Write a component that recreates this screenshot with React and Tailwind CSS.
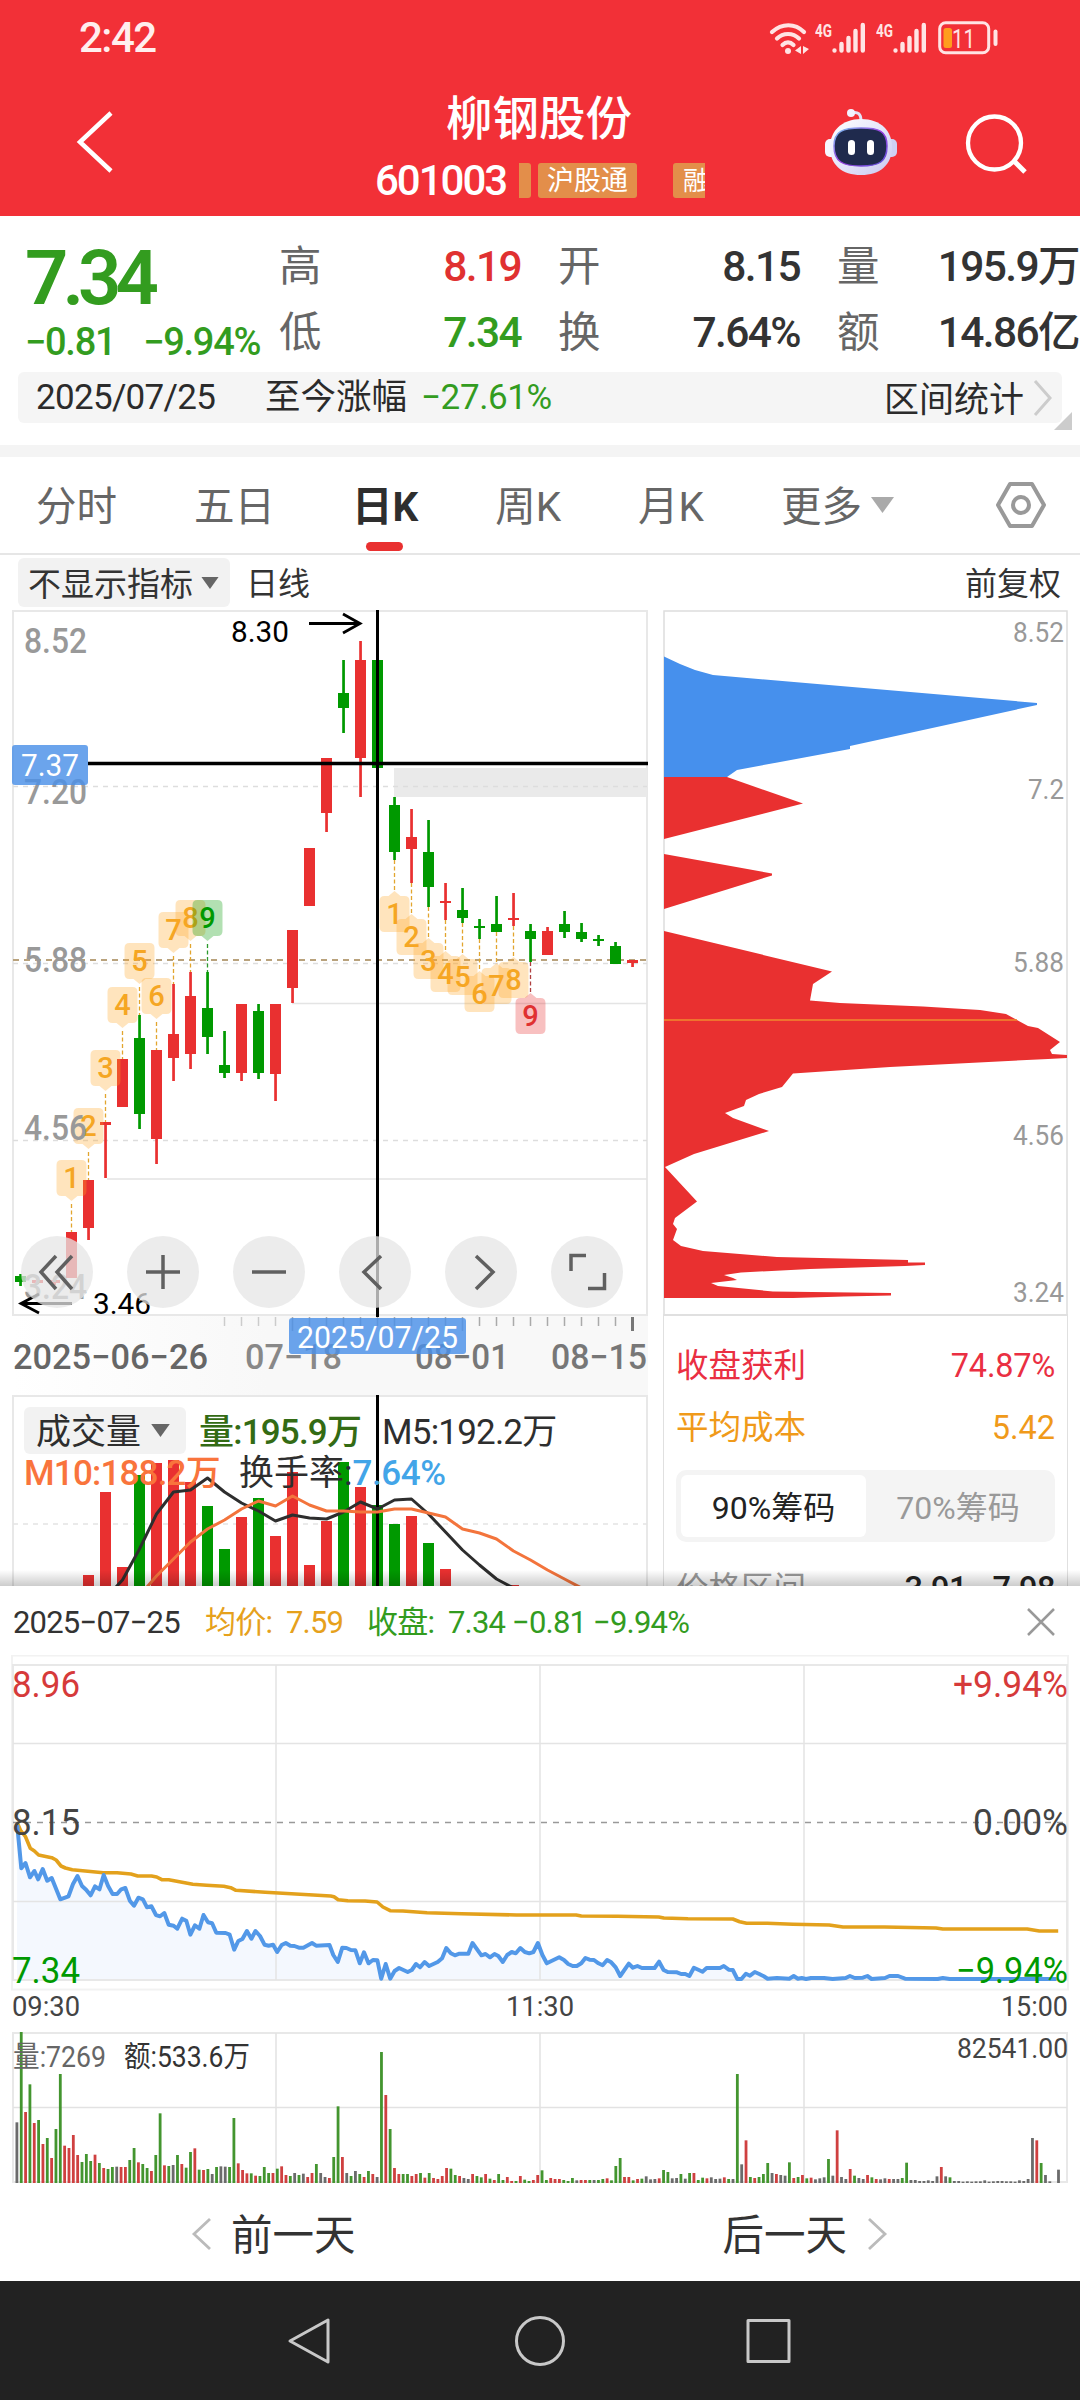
const RED = "#e93030";
const GREEN = "#009900";

// [high, top, bottom, low, colour]
const candles = [
  [1274, 1276, 1282, 1286, "g"],
  [1279, 1280, 1283, 1284, "r"],
  [1278, 1280, 1283, 1285, "r"],
  [1232, 1232, 1278, 1278, "r"],
  [1180, 1180, 1228, 1240, "r"],
  [1122, 1122, 1125, 1178, "r"],
  [1059, 1059, 1107, 1107, "r"],
  [1015, 1038, 1114, 1129, "g"],
  [1050, 1050, 1139, 1164, "r"],
  [984, 1034, 1058, 1081, "r"],
  [972, 996, 1054, 1069, "r"],
  [972, 1008, 1037, 1054, "g"],
  [1031, 1065, 1073, 1078, "g"],
  [1004, 1004, 1073, 1081, "r"],
  [1004, 1011, 1073, 1079, "g"],
  [1004, 1004, 1074, 1101, "r"],
  [930, 930, 988, 1003, "r"],
  [848, 848, 906, 906, "r"],
  [758, 758, 813, 832, "r"],
  [660, 693, 708, 733, "g"],
  [641, 660, 758, 797, "r"],
  [660, 660, 768, 768, "g"],
  [797, 805, 852, 860, "g"],
  [809, 837, 849, 883, "r"],
  [820, 852, 887, 907, "g"],
  [883, 901, 903, 920, "r"],
  [888, 910, 918, 923, "g"],
  [919, 926, 928, 939, "g"],
  [896, 924, 932, 932, "g"],
  [893, 918, 920, 926, "r"],
  [924, 931, 939, 962, "g"],
  [927, 931, 955, 955, "r"],
  [911, 924, 932, 938, "g"],
  [923, 932, 939, 942, "g"],
  [935, 939, 941, 946, "g"],
  [942, 946, 964, 964, "g"],
  [960, 960, 963, 967, "r"],
];
const cx = (i) => 20.5 + 17 * i;

// [candle, digit, box top]
const upTags = [
  [3, 1, 1160],
  [4, 2, 1108],
  [5, 3, 1050],
  [6, 4, 987],
  [7, 5, 943],
  [8, 6, 978],
  [9, 7, 912],
  [10, 8, 900],
  [11, 9, 900],
];
const downTags = [
  [22, 1, 896],
  [23, 2, 919],
  [24, 3, 943],
  [25, 4, 956],
  [26, 5, 959],
  [27, 6, 976],
  [28, 7, 968],
  [29, 8, 962],
  [30, 9, 998],
];

// [candle, top, colour]
const volumes = [
  [4, 1575, "r"], [5, 1492, "r"], [6, 1567, "r"], [7, 1475, "g"], [8, 1463, "r"], [9, 1460, "r"],
  [10, 1482, "r"], [11, 1506, "g"], [12, 1549, "g"], [13, 1517, "r"], [14, 1498, "g"], [15, 1536, "r"],
  [16, 1472, "r"], [17, 1565, "r"], [18, 1521, "r"], [19, 1462, "g"], [20, 1487, "r"], [21, 1505, "g"],
  [22, 1524, "g"], [23, 1516, "r"], [24, 1543, "g"], [25, 1569, "r"], [29, 1585, "r"],
];
const ma5 = [1580, 1549, 1514, 1492, 1490, 1478, 1492, 1503, 1511, 1521, 1515, 1518, 1519, 1512, 1502, 1509, 1500, 1499, 1514, 1532, 1550, 1565, 1579, 1588];
const ma10 = [1576, 1559, 1542, 1529, 1520, 1509, 1501, 1506, 1496, 1505, 1511, 1511, 1512, 1512, 1509, 1509, 1513, 1517, 1529, 1533, 1539, 1551, 1560, 1570, 1579, 1588];

const price =
  "50,555 62,685 74,669 87,712 100,693 111,718 124,687 137,722 150,714 175,778 199,769 212,732 225,708 238,738 250,749 263,766 276,739 289,748 301,705 314,738 327,762 340,762 352,748 364,744 377,782 389,797 402,773 415,778 427,802 440,799 453,825 465,829 477,819 490,854 504,857 515,866 529,836 541,842 553,884 566,856 579,866 591,825 604,847 616,850 628,878 655,879 667,884 680,929 692,903 704,897 717,873 730,896 742,873 755,888 768,914 780,917 793,914 805,936 818,915 830,909 843,917 855,918 868,923 881,923 906,909 918,917 957,915 968,945 981,966 994,923 1006,924 1019,930 1032,931 1045,970 1057,937 1070,970 1083,960 1096,961 1107,1016 1120,972 1133,1016 1146,993 1159,984 1184,996 1196,990 1208,972 1220,982 1233,966 1246,978 1271,966 1284,955 1296,924 1309,940 1321,946 1334,941 1360,941 1372,909 1398,946 1410,942 1423,952 1436,942 1447,948 1460,966 1473,945 1486,936 1498,940 1511,924 1524,936 1537,940 1549,936 1562,909 1575,945 1588,970 1624,952 1638,960 1650,972 1663,978 1675,978 1688,970 1700,954 1712,959 1725,960 1738,970 1750,976 1763,960 1775,967 1788,982 1801,1008 1826,971 1838,983 1851,978 1864,984 1901,984 1914,965 1927,990 1939,996 1966,997 1978,1002 1990,1002 2002,1008 2015,983 2028,989 2040,995 2052,984 2091,984 2102,978 2116,989 2128,990 2141,1017 2153,1017 2166,1001 2178,1007 2192,996 2205,1002 2218,1009 2229,1016 2256,1014 2292,1016 2305,1008 2317,1016 2328,1014 2341,1017 2355,1014 2393,1014 2418,1017 2456,1014 2468,1008 2482,1014 2506,1013 2519,1008 2531,1017 2570,1014 2583,1008 2608,1008 2628,1016 2723,1017 2738,1014 2758,1017 3068,1017";
const average =
  "50,548 60,572 74,590 88,625 100,633 112,645 150,653 163,660 177,678 190,684 210,689 300,698 340,698 380,702 400,708 440,708 455,711 470,719 490,719 560,733 600,736 650,739 670,743 685,751 770,757 960,768 970,770 982,779 1010,782 1060,783 1095,786 1112,801 1133,812 1170,813 1240,818 1340,821 1500,825 1673,825 1688,828 1793,829 1913,831 1928,834 1998,836 2128,837 2148,845 2168,850 2228,850 2303,853 2408,855 2448,861 2568,861 2718,864 2738,867 2983,867 3018,873 3073,873";
const plot = (s) =>
  s
    .split(" ")
    .map((p) => p.split(","))
    .map(([x, y]) => `${(x / 2.904).toFixed(1)},${(1640 + y / 3).toFixed(1)}`)
    .join(" ");

// one bar per minute, colour letter + size
const minuteBars =
  "k182 g453 r213 g296 r180 g189 r117 g135 r75 g162 g327 r112 r105 r144 r84 g63 g87 g66 r85 g60 r45 g42 g48 k49 r48 r48 g69 g105 r62 g57 g45 r36 g84 g209 r53 g51 k54 g84 r57 g46 g93 r104 g40 r39 g42 k27 g48 k50 k49 g48 g195 r59 r39 r29 g29 r22 g21 g48 g30 r30 g43 r50 r24 g21 k30 g24 k28 r18 r30 g57 k30 k18 r15 g78 g230 r78 k30 g21 k36 g27 r18 g36 r27 k18 g393 r264 g162 r45 r27 g27 g27 r21 r27 g30 r16 g30 r15 r12 r21 r45 g43 g24 r21 k15 k12 r27 g21 g17 r27 g13 r9 g27 g9 r18 r6 g6 r21 g10 g6 r9 r24 g38 g9 r15 r12 r12 g9 g6 g15 k8 r9 r9 g9 k9 g9 g12 r14 g8 g51 g75 r18 r18 g8 r12 g13 k20 k11 k12 r14 g39 g33 k14 k15 g27 k13 g30 r30 g9 g16 r14 k17 k12 k13 r17 g12 k12 g327 k56 r128 g18 r15 g18 g27 g60 k30 r27 k24 k22 g62 r15 g18 r24 g14 r16 k11 k14 k17 g72 k22 r158 k18 k12 r42 g22 k15 k12 r24 g17 r12 k11 k14 r12 k12 k12 g15 g61 k9 k9 k6 k6 k8 k6 k20 r48 k20 g17 k6 k6 k4 k5 k4 k5 k5 k8 k4 k5 k6 k6 k5 k5 k4 k8 k6 k12 k135 r128 g60 k24 k5 k0 k40".split(" ");
const barColors = { k: "#6b6b6b", g: "#43952f", r: "#cf4040" };

// chart label with a fixed width
function Label({ x, y, size, len, fill, end, weight, children }) {
  return (
    <text
      x={x}
      y={y}
      fontSize={size}
      fill={fill}
      fontWeight={weight || 400}
      textAnchor={end ? "end" : "start"}
      textLength={len}
      lengthAdjust="spacingAndGlyphs"
    >
      {children}
    </text>
  );
}

function Signal() {
  return (
    <svg className="h-[34px] w-[51px]" viewBox="0 0 51 34">
      <text x="0" y="16" fontSize="19" fontWeight="700" fill="#ffe4e4" textLength="17" lengthAdjust="spacingAndGlyphs">4G</text>
      <g stroke="#ffe4e4" strokeWidth="4.4" strokeLinecap="round">
        <path d="M19.500 29.500V29.600M26.500 23V29.500M33.500 17V29.500M40.500 10V29.500M47.800 4V29.500" />
      </g>
    </svg>
  );
}

function StatusBar() {
  return (
    <div className="flex h-[76px] items-center justify-between pl-[79px] pr-[81px]">
      <span className="text-[42px] font-medium leading-none tracking-[-1.5px] text-[#ffeeee]">2:42</span>
      <div className="flex items-center">
        <svg className="mr-[6px] h-[34px] w-[40px]" viewBox="0 0 40 34" fill="none" stroke="#ffe4e4" strokeWidth="4.2" strokeLinecap="round">
          <path d="M3 11C13 2 26 2 35 11M8 17.500C14 11.500 24 11.500 30 17.500M13.500 24C17 20.500 21 20.500 24.500 24" />
          <circle cx="19" cy="30" r="3" fill="#ffe4e4" stroke="none" />
          <path d="M32 25v8l-6-3.500zM34 25v8l6-5z" fill="#ffe4e4" stroke="none" />
        </svg>
        <Signal />
        <span className="w-[10px]" />
        <Signal />
        <svg className="ml-[11px] h-[34px] w-[61px]" viewBox="0 0 61 34" fill="none">
          <rect x="1.700" y="1.700" width="49" height="30" rx="6" stroke="#ffe4e4" strokeWidth="3" />
          <rect x="5.500" y="7" width="8.500" height="20" rx="2.500" fill="#ff9d1e" />
          <text x="14" y="26.500" fontSize="25" fill="#ffe4e4" textLength="23" lengthAdjust="spacingAndGlyphs">11</text>
          <path d="M57.500 10.500V23" stroke="#ffe4e4" strokeWidth="4" strokeLinecap="round" />
        </svg>
      </div>
    </div>
  );
}

function Robot() {
  return (
    <svg className="h-[70px] w-[74px]" viewBox="0 0 74 70">
      <defs>
        <linearGradient id="shell" x1="0" y1="0" x2="1" y2="1">
          <stop offset="0" stopColor="#ffffff" />
          <stop offset="0.5" stopColor="#e6e6fa" />
          <stop offset="1" stopColor="#c9c8f0" />
        </linearGradient>
        <linearGradient id="glow" x1="0" y1="0" x2="1" y2="1">
          <stop offset="0" stopColor="#79c6f0" />
          <stop offset="0.5" stopColor="#9a3fe0" />
          <stop offset="1" stopColor="#5b55d8" />
        </linearGradient>
      </defs>
      <path d="M27 6C34 4 37 7 37 14" fill="none" stroke="#e3e2f7" strokeWidth="3" />
      <circle cx="27" cy="6" r="4" fill="#f3f2ff" />
      <rect x="1" y="32" width="12" height="18" rx="5" fill="#f7f7ff" />
      <rect x="61" y="32" width="12" height="18" rx="5" fill="#cfd0f3" />
      <path d="M37 12C57 12 68 24 68 40C68 58 56 68 37 68C18 68 6 58 6 40C6 24 18 12 37 12Z" fill="url(#shell)" />
      <path d="M37 21C55 21 63 24 63 39C63 55 55 59 37 59C19 59 10 55 10 39C10 24 19 21 37 21Z" fill="#1f2a4d" stroke="url(#glow)" strokeWidth="1.500" />
      <rect x="24" y="33" width="7" height="15" rx="3.500" fill="#fff" />
      <rect x="43" y="33" width="7" height="15" rx="3.500" fill="#fff" />
    </svg>
  );
}

function Header() {
  return (
    <header className="h-[216px] bg-[#f23037] text-white">
      <StatusBar />
      <div className="flex h-[140px] items-start">
        <div className="w-[375px] pl-[74px] pt-[33px]">
          <svg className="h-[66px] w-[42px]" viewBox="0 0 42 66" fill="none" stroke="#fff" strokeWidth="4.500">
            <path d="M37 4L6 33L37 62" />
          </svg>
        </div>
        <div className="w-[330px] pt-[18px]">
          <h1 className="pl-[71px] text-[46.5px] font-medium leading-[50px]">柳钢股份</h1>
          <div className="mt-[18px] flex h-[36px] items-center overflow-hidden">
            <span className="w-[144px] pt-[2px] text-[42px] font-medium leading-none tracking-[-2px]">601003</span>
            <span className="h-[35px] w-[12px] shrink-0 rounded-r-[3px] bg-[#e38e4a]" />
            <span className="ml-[7px] flex h-[35px] w-[99px] shrink-0 items-center justify-center rounded-[3px] bg-[#e38e4a] pt-[2px] text-[27px] leading-none">沪股通</span>
            <span className="ml-[36px] flex h-[35px] w-[32px] shrink-0 items-center overflow-hidden rounded-l-[3px] bg-[#e38e4a] pl-[10px] pt-[2px] text-[26px] leading-none">融</span>
          </div>
        </div>
        <div className="flex pl-[119px] pt-[31px]">
          <Robot />
          <svg className="ml-[67px] mt-[5px] h-[64px] w-[64px]" viewBox="0 0 64 64" fill="none" stroke="#fff" strokeWidth="4.300">
            <circle cx="29.500" cy="31" r="26.500" />
            <path d="M49 49L60 60" strokeWidth="5" />
          </svg>
        </div>
      </div>
    </header>
  );
}

function Stat({ label, value, color = "text-[#333]" }) {
  return (
    <div className="flex w-[242px] items-center justify-between text-[42.5px] leading-[42px]">
      <span className="text-[#666]">{label}</span>
      <span className={`whitespace-nowrap font-medium tracking-[-1.6px] ${color}`}>{value}</span>
    </div>
  );
}

function Quote() {
  return (
    <section className="h-[229px] overflow-hidden">
      <div className="flex h-[156px]">
        <div className="w-[279px] pl-[25px] pt-[24px] text-[#339c1f]">
          <div className="text-[76px] font-semibold leading-[76px] tracking-[-6px]">7.34</div>
          <div className="mt-[7px] flex gap-[28px] whitespace-nowrap text-[38px] font-medium leading-[38px] tracking-[-1.3px]">
            <span>−0.81</span>
            <span>−9.94%</span>
          </div>
        </div>
        <div className="grid grid-cols-[242px_242px_242px] content-start gap-x-[37px] gap-y-[24px] pt-[30px]">
          <Stat label="高" value="8.19" color="text-[#e03131]" />
          <Stat label="开" value="8.15" />
          <Stat label="量" value="195.9万" />
          <Stat label="低" value="7.34" color="text-[#339c1f]" />
          <Stat label="换" value="7.64%" />
          <Stat label="额" value="14.86亿" />
        </div>
      </div>
      <div className="relative mx-[18px] flex h-[51px] items-center rounded-[6px] bg-[#f5f5f5] pl-[18px] text-[35px] leading-none text-[#2b2b2b]">
        <span className="w-[229px] tracking-[-0.7px]">2025/07/25</span>
        <span className="w-[156px] text-[35.5px]">至今涨幅</span>
        <span className="tracking-[-0.4px] text-[#339c1f]">−27.61%</span>
        <span className="ml-auto pt-[5px]">区间统计</span>
        <svg className="mx-[8px] h-[36px] w-[22px]" viewBox="0 0 22 36" fill="none" stroke="#ccc" strokeWidth="3">
          <path d="M3 1L18 18L3 35" />
        </svg>
        <svg className="absolute -right-[10px] top-[40px] h-[18px] w-[18px]" viewBox="0 0 18 18">
          <path d="M18 0V18H0Z" fill="#ccc" />
        </svg>
      </div>
    </section>
  );
}

function Down({ className }) {
  return (
    <svg className={className} viewBox="0 0 20 14">
      <path d="M0 0H20L10 14Z" fill="currentColor" />
    </svg>
  );
}

function Tabs() {
  return (
    <nav className="flex h-[98px] items-center justify-between border-b-2 border-[#e6e6e6] pl-[36px] pr-[34px] text-[40.5px] leading-none text-[#666]">
      <div className="flex w-[858px] items-center justify-between pt-[4px]">
        <span>分时</span>
        <span>五日</span>
        <span className="relative font-bold text-[#2e2e2e]">
          日K
          <i className="absolute left-[14px] top-[55px] h-[9px] w-[37px] rounded-full bg-[#e93030]" />
        </span>
        <span>周K</span>
        <span>月K</span>
        <span className="flex items-center">
          更多
          <Down className="mb-[4px] ml-[9px] h-[18px] w-[23px] text-[#aaa]" />
        </span>
      </div>
      <svg className="h-[48px] w-[50px]" viewBox="0 0 50 48" fill="none" stroke="#999" strokeWidth="4" strokeLinejoin="round">
        <path d="M14 3H36L48 24L36 45H14L2 24Z" />
        <circle cx="25" cy="24" r="8" />
      </svg>
    </nav>
  );
}

function Tag({ x, y, digit, down, tone }) {
  const styles = { o: ["#ffa726", "#f5a623"], g: ["#009900", "#009900"], r: ["#e93030", "#e03131"] };
  const [bg, fg] = styles[tone];
  return (
    <g>
      <g fill={bg} opacity="0.3">
        <path
          d={
            down
              ? `M${x - 10} ${y}h4l6 -5l6 5h4q5 0 5 5v26q0 5 -5 5h-20q-5 0 -5 -5v-26q0 -5 5 -5z`
              : `M${x - 10} ${y}h20q5 0 5 5v26q0 5 -5 5h-4l-6 5l-6 -5h-4q-5 0 -5 -5v-26q0 -5 5 -5z`
          }
        />
      </g>
      <text x={x} y={y + 28} fontSize="29" fontWeight="500" fill={fg} textAnchor="middle">
        {digit}
      </text>
    </g>
  );
}

function ControlButtons() {
  const icons = [
    "M56 1256L41 1272L56 1289M72 1256L57 1272L72 1289",
    "M146 1272H180M163 1255V1289",
    "M252 1272H286",
    "M381 1256L364 1272L381 1289",
    "M476 1256L493 1272L476 1289",
    "M571 1271V1255.500H586M588 1288.500H604.500V1273",
  ];
  return icons.map((d, i) => (
    <g key={d}>
      <circle cx={57 + 106 * i} cy="1272" r="36" fill="#e6e6e6" opacity="0.75" />
      <path d={d} fill="none" stroke="#606060" strokeWidth="3.500" />
    </g>
  ));
}

function CandleChart() {
  return (
    <svg className="h-[785px] w-[636px]" viewBox="12 610 636 785">
      <defs>
        <linearGradient id="axisFade" x1="0" x2="1" y1="0" y2="0">
          <stop offset="0" stopColor="#fff" />
          <stop offset="0.4" stopColor="#f8f8f8" />
        </linearGradient>
      </defs>
      <rect x="13" y="1316" width="635" height="79" fill="url(#axisFade)" />
      <rect x="13" y="611" width="634" height="704" fill="none" stroke="#e8e8e8" strokeWidth="2" />
      <rect x="394" y="768" width="253" height="29" fill="#eaeaea" />
      <path d="M13 786.500H647M13 963.500H647M13 1140.500H647" stroke="#ddd" strokeWidth="1.500" strokeDasharray="5 5" />
      <path d="M292 1003.500H647M107 1179H647" stroke="#e4e4e4" strokeWidth="1.500" />
      <path d="M13 960H647" stroke="#b9a27c" strokeWidth="1.800" strokeDasharray="6 5" />
      {upTags.map(([i, d, y]) => (
        <path key={i} d={`M${cx(i)} ${y + 44}V${candles[i][0]}`} stroke={d === 9 ? "#2c9a2c" : "#e2a52e"} strokeWidth="1.300" strokeDasharray="4 2.500" />
      ))}
      {downTags.map(([i, d, y]) => (
        <path key={i} d={`M${cx(i)} ${candles[i][3]}V${y - 6}`} stroke={d === 9 ? "#b04040" : "#e2a52e"} strokeWidth="1.300" strokeDasharray="4 2.500" />
      ))}
      {candles.map(([h, t, b, l, c], i) => (
        <g key={i} fill={c === "r" ? RED : GREEN}>
          <rect x={cx(i) - 1.3} y={h} width="2.700" height={l - h} />
          <rect x={cx(i) - 5.5} y={t} width="11" height={b - t} />
        </g>
      ))}
      {upTags.map(([i, d, y]) => (
        <Tag key={i} x={cx(i)} y={y} digit={d} tone={d === 9 ? "g" : "o"} />
      ))}
      {downTags.map(([i, d, y]) => (
        <Tag key={i} x={cx(i)} y={y} digit={d} tone={d === 9 ? "r" : "o"} down />
      ))}
      <Label x={24} y={653} size={35} len={63} fill="#999" weight={500}>8.52</Label>
      <Label x={24} y={804} size={35} len={63} fill="#999" weight={500}>7.20</Label>
      <Label x={24} y={972} size={35} len={63} fill="#999" weight={500}>5.88</Label>
      <Label x={24} y={1140} size={35} len={63} fill="#999" weight={500}>4.56</Label>
      <Label x={24} y={1299} size={35} len={63} fill="#999" weight={500}>3.24</Label>
      <Label x={231} y={642} size={30} len={58} fill="#000">8.30</Label>
      <path d="M309 623.500H360M343 614L360 623.500L343 633" fill="none" stroke="#000" strokeWidth="2.800" />
      <Label x={93} y={1314} size={30} len={58} fill="#000">3.46</Label>
      <path d="M72 1303.500H21M39 1294L21 1303.500L39 1313" fill="none" stroke="#000" strokeWidth="2.800" />
      <path d="M88 763.500H648" stroke="#000" strokeWidth="3.500" />
      <path d="M377.500 610V1317" stroke="#000" strokeWidth="3" />
      <rect x="12" y="745" width="76" height="40" rx="3" fill="#4a90e8" opacity="0.82" />
      <Label x={21} y={776} size={32} len={58} fill="#fff">7.37</Label>
      <ControlButtons />
      {Array.from({ length: 24 }, (_, i) => (
        <path
          key={i}
          d={`M${224.5 + 17 * i} 1317V${i === 4 || i === 14 ? 1331 : 1326}`}
          stroke={i < 4 ? "#ccc" : "#aaa"}
          strokeWidth="1.500"
        />
      ))}
      <path d="M632.500 1317V1331" stroke="#777" strokeWidth="3" />
      <Label x={13} y={1369} size={35} len={195} fill="#666" weight={500}>2025−06−26</Label>
      <Label x={245} y={1369} size={35} len={97} fill="#888" weight={500}>07−18</Label>
      <Label x={415} y={1369} size={35} len={94} fill="#777" weight={500}>08−01</Label>
      <Label x={551} y={1369} size={35} len={96} fill="#777" weight={500}>08−15</Label>
      <rect x="289" y="1318" width="177" height="36" rx="3" fill="#4a90e8" opacity="0.82" />
      <Label x={297} y={1348} size={31} len={161} fill="#fff">2025/07/25</Label>
    </svg>
  );
}

function VolumeChart() {
  return (
    <div className="relative h-[191px]">
      <svg className="block h-[191px] w-[636px]" viewBox="12 1395 636 191">
        <path d="M13 1600V1396H647V1600" fill="none" stroke="#e8e8e8" strokeWidth="2" />
        <path d="M13 1524H647" stroke="#e4e4e4" strokeWidth="1.500" strokeDasharray="5 5" />
        {volumes.map(([i, y, c]) => (
          <rect key={i} x={cx(i) - 5.5} y={y} width="11" height={1590 - y} fill={c === "r" ? RED : GREEN} />
        ))}
        <path d="M377.500 1395V1590" stroke="#000" strokeWidth="3" />
        <polyline points={"116,1587 " + ma5.map((y, i) => `${cx(i + 6)},${y}`).join(" ")} fill="none" stroke="#2e2e2e" strokeWidth="3" strokeLinejoin="round" />
        <polyline points={"147,1587 " + ma10.map((y, i) => `${cx(i + 8)},${y}`).join(" ")} fill="none" stroke="#f3743c" strokeWidth="3" strokeLinejoin="round" />
      </svg>
      <div className="absolute left-[12px] top-[12px] whitespace-nowrap text-[35px] leading-none tracking-[-0.8px] text-[#2e2e2e]">
        <div className="flex h-[47px] items-center">
          <span className="flex h-[47px] w-[162px] items-center rounded-[6px] bg-[#f2f2f2] pl-[12px] pt-[3px] tracking-normal">
            成交量
            <Down className="mb-[3px] ml-[10px] h-[13px] w-[19px] text-[#666]" />
          </span>
          <span className="ml-[13px] w-[183px] pt-[3px] font-medium text-[#336b14]">量:195.9万</span>
          <span className="pt-[3px]">M5:192.2万</span>
        </div>
        <div className="mt-[2px] flex items-center font-medium">
          <span className="w-[215px] text-[#f9743c]">M10:188.2万</span>
          <span className="font-normal tracking-normal">换手率:</span>
          <span className="tracking-[-0.4px] text-[#42a5e8]">7.64%</span>
        </div>
      </div>
    </div>
  );
}

function ChipChart() {
  return (
    <svg className="h-[704px] w-[405px]" viewBox="663 610 405 704">
      <path d="M664 1320V611H1067V1320" fill="none" stroke="#ddd" strokeWidth="1.500" />
      <path d="M664 656.500L680 664L695 670L713 675L1037 703L1037 705L850 746L850 749L737 770L727 777H664Z" fill="#4690ed" />
      <g fill={RED}>
        <path d="M664 777H727L803 803.500L664 839Z" />
        <path d="M664 854L772 873.500V875.500L664 909Z" />
        <path d="M664 931L832 971.500L813 984L810 1000.500L840 1003L923 1006.500L980 1010L1006 1014L1028 1026L1038 1028L1060 1042L1050 1050L1052 1054L1067 1055V1058L1048 1059L890 1067L793 1073.500L782 1087L759 1094L746 1100L744 1106L725 1113L733 1118L769 1131L694 1154L665 1167L697 1201.500L675 1218L673 1224L677 1229L673 1240L681 1246L703 1251L777 1257L908 1260V1262.500H925V1265L905 1266L810 1269L741 1272.500L724 1275L733 1278L737 1280L711 1283L718 1286L773 1291.500L891 1293V1295.500L844 1296.500L793 1298H664Z" />
      </g>
      <path d="M664 1020H1017" stroke="#f08a2c" strokeWidth="1.500" />
      <Label x={1064} y={642} size={28} len={51} fill="#999" end>8.52</Label>
      <Label x={1064} y={799} size={28} len={36} fill="#999" end>7.2</Label>
      <Label x={1064} y={972} size={28} len={51} fill="#999" end>5.88</Label>
      <Label x={1064} y={1145} size={28} len={51} fill="#999" end>4.56</Label>
      <Label x={1064} y={1302} size={28} len={51} fill="#999" end>3.24</Label>
    </svg>
  );
}

function ChipPanel() {
  return (
    <div className="flex h-[272px] flex-col overflow-hidden border-x border-t-2 border-[#e0e0e0] px-[12px] text-[32.5px] leading-none">
      <div className="mt-[32px] flex h-[36px] shrink-0 items-center justify-between text-[#ea2f42]">
        <span>收盘获利</span>
        <span className="tracking-[-0.2px]">74.87%</span>
      </div>
      <div className="mt-[26px] flex h-[36px] shrink-0 items-center justify-between text-[#f09a1a]">
        <span>平均成本</span>
        <span>5.42</span>
      </div>
      <div className="mt-[24px] flex h-[72px] shrink-0 rounded-[10px] bg-[#f4f4f4] p-[5px] text-[32px] text-[#999]">
        <span className="flex h-[62px] w-[185px] items-center justify-center rounded-[6px] bg-white pt-[3px] text-[#222]">90%筹码</span>
        <span className="flex flex-1 items-center justify-center pt-[3px]">70%筹码</span>
      </div>
      <div className="mt-[31px] flex shrink-0 items-center justify-between text-[#999]">
        <span>价格区间</span>
        <span className="whitespace-pre font-medium tracking-[-0.5px] text-[#222]">3.91 - 7.98</span>
      </div>
    </div>
  );
}

function KLine() {
  return (
    <section className="relative h-[1031px] overflow-hidden">
      <div className="flex h-[55px] items-center justify-between pl-[18px] pr-[19px] text-[32px] leading-none text-[#333]">
        <div className="flex items-center">
          <span className="flex h-[49px] w-[212px] items-center rounded-[6px] bg-[#f2f2f2] pl-[10px]">
            <span className="pt-[3px] text-[33px]">不显示指标</span>
            <Down className="ml-[8px] h-[12px] w-[18px] text-[#666]" />
          </span>
          <span className="ml-[16px] pt-[3px]">日线</span>
        </div>
        <span className="pt-[3px]">前复权</span>
      </div>
      <div className="flex items-start gap-[15px] pl-[12px]">
        <div className="flex w-[636px] flex-col">
          <CandleChart />
          <VolumeChart />
        </div>
        <div className="flex w-[405px] flex-col">
          <ChipChart />
          <ChipPanel />
        </div>
      </div>
      <div className="absolute inset-x-0 bottom-0 h-[16px] bg-gradient-to-t from-black/20 to-transparent" />
    </section>
  );
}

function Intraday() {
  const line = plot(price);
  return (
    <section className="h-[695px] bg-white">
      <div className="flex h-[69px] items-center pl-[13px] pr-[25px] pt-[3px] text-[31px] leading-none">
        <span className="w-[192px] tracking-[-0.8px] text-[#333]">2025−07−25</span>
        <span className="w-[162px] whitespace-pre tracking-[-0.8px] text-[#e6a11c]">均价:  7.59</span>
        <span className="whitespace-pre tracking-[-0.8px] text-[#339c1f]">收盘:  7.34 −0.81 −9.94%</span>
        <svg className="ml-auto h-[28px] w-[28px]" viewBox="0 0 28 28" stroke="#999" strokeWidth="2.500">
          <path d="M1 1L27 27M27 1L1 27" />
        </svg>
      </div>
      <svg className="block h-[535px] w-[1080px]" viewBox="0 1655 1080 535">
        <rect x="12" y="1655.500" width="1056" height="334" fill="none" stroke="#f2f2f2" strokeWidth="2" />
        <polygon points={`17,1980 ${line} 1056,1980`} fill="#f4f8fe" />
        <rect x="13" y="1665" width="1054" height="315" fill="none" stroke="#e8e8e8" strokeWidth="2" />
        <path d="M276 1665V1980M540 1665V1980M804 1665V1980M13 1743.500H1067M13 1901.500H1067" stroke="#e4e4e4" strokeWidth="1.500" />
        <path d="M13 1822.500H1067" stroke="#999" strokeWidth="1.600" strokeDasharray="6 6" />
        <polyline points={plot(average)} fill="none" stroke="#e3a11c" strokeWidth="3.600" strokeLinejoin="round" />
        <polyline points={line} fill="none" stroke="#5298e8" strokeWidth="4" strokeLinejoin="round" />
        <Label x={12} y={1697} size={36} len={68} fill="#d63a3a">8.96</Label>
        <Label x={1068} y={1697} size={36} len={115} fill="#d63a3a" end>+9.94%</Label>
        <Label x={12} y={1835} size={36} len={68} fill="#444">8.15</Label>
        <Label x={1068} y={1835} size={36} len={95} fill="#444" end>0.00%</Label>
        <Label x={12} y={1983} size={36} len={68} fill={GREEN}>7.34</Label>
        <Label x={1068} y={1983} size={36} len={112} fill={GREEN} end>−9.94%</Label>
        <Label x={12} y={2015.500} size={28} len={68} fill="#444">09:30</Label>
        <Label x={506} y={2015.500} size={28} len={68} fill="#444">11:30</Label>
        <Label x={1068} y={2015.500} size={28} len={67} fill="#444" end>15:00</Label>

        <rect x="13" y="2033" width="1054" height="149" fill="none" stroke="#e8e8e8" strokeWidth="2" />
        <path d="M276 2033V2182M540 2033V2182M804 2033V2182M13 2107.500H1067" stroke="#e2e2e2" strokeWidth="1.500" />
        {minuteBars.map((b, i) => {
          const h = b.slice(1) / 3;
          return <rect key={i} x={15.5 + i * 4.34} y={2183 - h} width="2.800" height={h} fill={barColors[b[0]]} />;
        })}
        <Label x={13} y={2067} size={29} len={93} fill="#666">量:7269</Label>
        <Label x={124} y={2067} size={29} len={126} fill="#333">额:533.6万</Label>
        <Label x={1068} y={2058} size={28} len={111} fill="#444" end>82541.00</Label>
      </svg>
      <div className="flex h-[88px] items-center text-[41.5px] leading-none text-[#333]">
        <svg className="ml-[191px] h-[34px] w-[22px]" viewBox="0 0 22 34" fill="none" stroke="#bbb" strokeWidth="2.800">
          <path d="M19 2L3 17L19 32" />
        </svg>
        <span className="ml-[18px] pt-[3px]">前一天</span>
        <span className="ml-[367px] pt-[3px]">后一天</span>
        <svg className="ml-[20px] h-[34px] w-[22px]" viewBox="0 0 22 34" fill="none" stroke="#bbb" strokeWidth="2.800">
          <path d="M2 2L18 17L2 32" />
        </svg>
      </div>
    </section>
  );
}

function SystemNav() {
  return (
    <footer className="flex h-[119px] items-center justify-between bg-[#222] px-[284px]">
      <svg className="h-[54px] w-[54px]" viewBox="0 0 54 54" fill="none" stroke="#c8c8c8" strokeWidth="3" strokeLinejoin="round">
        <path d="M44 6V48L6 27Z" />
      </svg>
      <svg className="h-[54px] w-[54px]" viewBox="0 0 54 54" fill="none" stroke="#c8c8c8" strokeWidth="3">
        <circle cx="27" cy="27" r="23.500" />
      </svg>
      <svg className="h-[54px] w-[54px]" viewBox="0 0 54 54" fill="none" stroke="#c8c8c8" strokeWidth="3" strokeLinejoin="round">
        <rect x="6" y="6.500" width="41" height="41" />
      </svg>
    </footer>
  );
}

export default function App() {
  return (
    <main className="h-[2400px] w-[1080px] overflow-hidden bg-white font-[Roboto,'Noto_Sans_CJK_SC',sans-serif]">
      <Header />
      <Quote />
      <div className="h-[12px] bg-[#f4f4f4]" />
      <Tabs />
      <KLine />
      <Intraday />
      <SystemNav />
    </main>
  );
}
